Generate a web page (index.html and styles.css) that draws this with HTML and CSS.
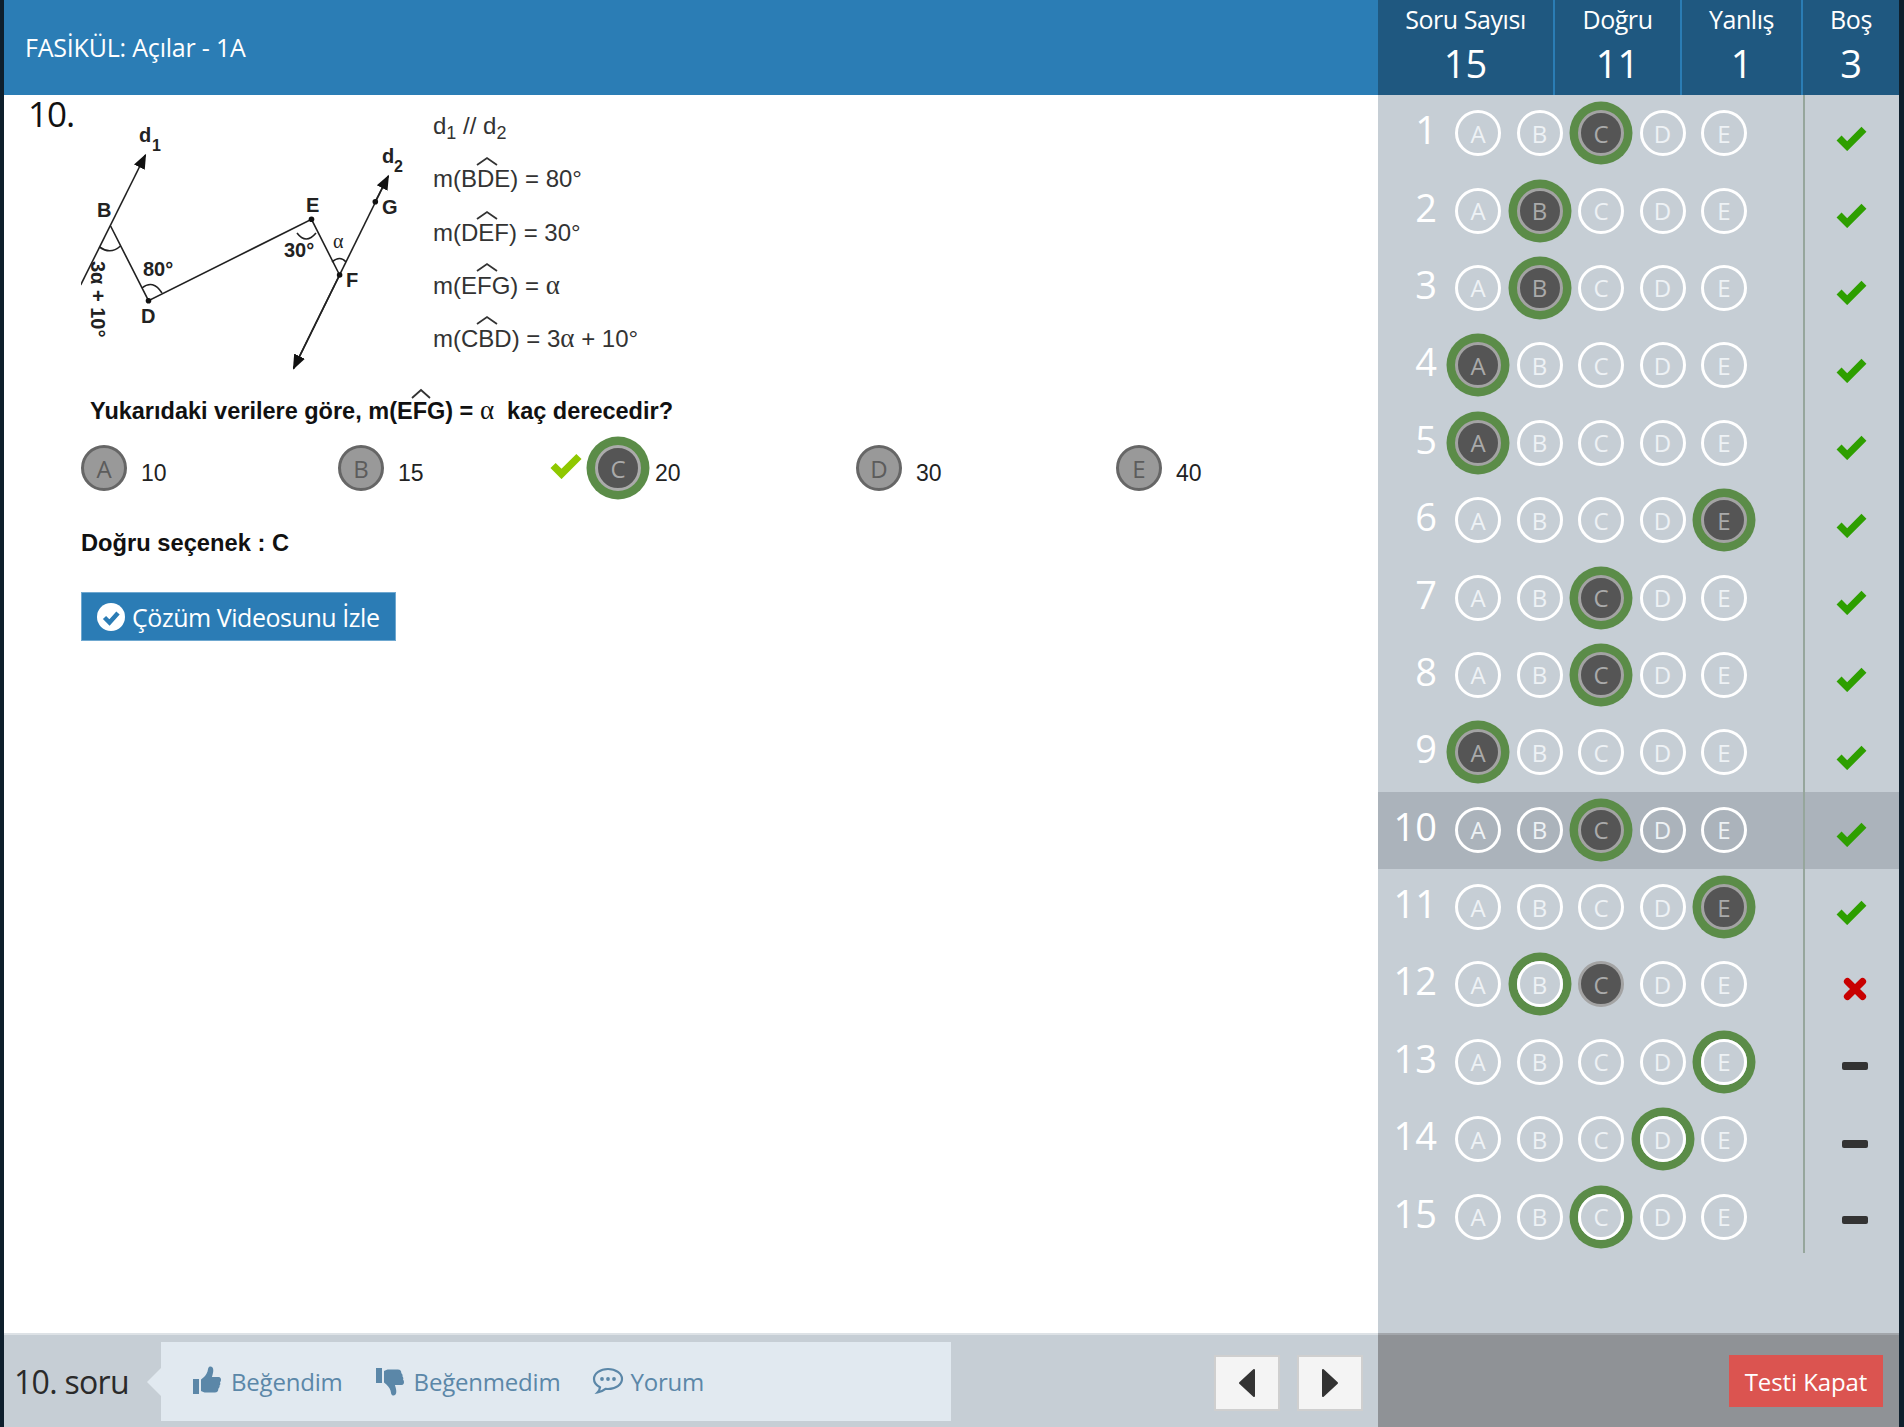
FILE: index.html
```html
<!DOCTYPE html>
<html lang="tr">
<head>
<meta charset="utf-8">
<title>FASİKÜL: Açılar - 1A</title>
<link rel="stylesheet" href="styles.css">
</head>
<body>
<div class="app">
  <header class="topbar">
    <div class="topbar-title">FASİKÜL: Açılar - 1A</div>
    <div class="stats">
      <div class="stat stat-total"><span class="stat-label">Soru Sayısı</span><span class="stat-value">15</span></div>
      <div class="stat stat-right"><span class="stat-label">Doğru</span><span class="stat-value">11</span></div>
      <div class="stat stat-wrong"><span class="stat-label">Yanlış</span><span class="stat-value">1</span></div>
      <div class="stat stat-empty"><span class="stat-label">Boş</span><span class="stat-value">3</span></div>
    </div>
  </header>

  <div class="middle">
    <main class="question">
      <div class="question-head">
        <div class="question-no">10.</div>
        <svg class="figure" viewBox="82 95 620 337" width="620" height="337" aria-label="Soru görseli">
          <defs>
            <marker id="tip" viewBox="0 0 10 10" refX="9" refY="5" markerWidth="15" markerHeight="15" markerUnits="userSpaceOnUse" orient="auto"><path d="M0 1 10 5 0 9z" fill="#111"/></marker>
          </defs>
          <g class="fig-lines">
            <line x1="81.7" y1="285" x2="146.4" y2="155" marker-end="url(#tip)"/>
            <polyline points="111.6,226 149.5,300.7 312.5,219.3 340.6,275"/>
            <line x1="294.6" y1="368.3" x2="389.3" y2="176" />
            <line x1="340.6" y1="275" x2="294.6" y2="368.3" marker-end="url(#tip)"/>
            <line x1="376" y1="202" x2="389.3" y2="176" marker-end="url(#tip)"/>
            <path d="M100.5 247q11 8 21 -1M143 288q11-9 20 5M298 233q9 12 19 0M333 262q8-7 14 0"/>
          </g>
          <g class="fig-dots">
            <circle cx="149.5" cy="300.7" r="2.8"/><circle cx="312.5" cy="219.3" r="2.8"/><circle cx="340.6" cy="275" r="2.8"/><circle cx="376.3" cy="201.7" r="2.8"/>
          </g>
          <g class="fig-label">
            <text x="140" y="142">d</text><text class="fig-sub" x="153" y="151">1</text>
            <text x="383" y="163">d</text><text class="fig-sub" x="395" y="172">2</text>
            <text x="98" y="217">B</text><text x="307" y="212">E</text><text x="383" y="214">G</text>
            <text x="347" y="287">F</text><text x="142" y="323">D</text>
            <text x="144" y="276">80°</text><text x="285" y="257">30°</text>
            <text class="fig-alpha" x="334" y="248">α</text>
            <text transform="translate(92 261) rotate(90)">3α + 10°</text>
          </g>
          <g class="fig-formula">
            <text x="434" y="134">d<tspan class="fig-formula-sub" dy="5">1</tspan><tspan dy="-5"> // d</tspan><tspan class="fig-formula-sub" dy="5">2</tspan></text>
            <text x="434" y="187">m(BDE) = 80°</text>
            <text x="434" y="240.500">m(DEF) = 30°</text>
            <text x="434" y="294">m(EFG) = <tspan class="fig-serif">α</tspan></text>
            <text x="434" y="347">m(CBD) = 3<tspan class="fig-serif">α</tspan> + 10°</text>
            <text class="fig-ask" x="91" y="418.500">Yukarıdaki verilere göre, m(EFG) = <tspan class="fig-serif-light">α</tspan>  kaç derecedir?</text>
          </g>
          <g class="fig-hats">
            <path d="M478 165 488 158 498 165M478 219 488 212 498 219M478 271 488 264 498 271M478 324 488 317 498 324M413 398 422 390 431 398"/>
          </g>
        </svg>
      </div>

      <div class="choices">
        <div class="choice"><span class="choice-mark">A</span><span class="choice-text">10</span></div>
        <div class="choice"><span class="choice-mark">B</span><span class="choice-text">15</span></div>
        <div class="choice">
          <svg class="choice-tick" viewBox="0 0 30 24" width="34" height="27"><polyline points="3.5,12 11,19.500 26.500,4" /></svg>
          <span class="choice-mark choice-mark-on">C</span><span class="choice-text">20</span>
        </div>
        <div class="choice"><span class="choice-mark">D</span><span class="choice-text">30</span></div>
        <div class="choice"><span class="choice-mark">E</span><span class="choice-text">40</span></div>
      </div>

      <p class="answer">Doğru seçenek : C</p>

      <button class="video-btn" type="button">
        <svg viewBox="0 0 28 28" width="28" height="28"><circle cx="14" cy="14" r="14" fill="#fff"/><polyline points="7.500,14.500 12.500,19.500 21,10" fill="none" stroke="#2b7cb5" stroke-width="4.500"/></svg>
        <span>Çözüm Videosunu İzle</span>
      </button>
    </main>

    <aside class="sheet">
      <div class="row"><span class="row-no">1</span><div class="opts"><span class="opt">A</span><span class="opt">B</span><span class="opt opt-fill opt-ring">C</span><span class="opt">D</span><span class="opt">E</span></div><div class="mark"><svg class="ok" viewBox="0 0 30 24"><polyline points="3.5,12 11,19.500 26.500,4"/></svg></div></div>
      <div class="row"><span class="row-no">2</span><div class="opts"><span class="opt">A</span><span class="opt opt-fill opt-ring">B</span><span class="opt">C</span><span class="opt">D</span><span class="opt">E</span></div><div class="mark"><svg class="ok" viewBox="0 0 30 24"><polyline points="3.5,12 11,19.500 26.500,4"/></svg></div></div>
      <div class="row"><span class="row-no">3</span><div class="opts"><span class="opt">A</span><span class="opt opt-fill opt-ring">B</span><span class="opt">C</span><span class="opt">D</span><span class="opt">E</span></div><div class="mark"><svg class="ok" viewBox="0 0 30 24"><polyline points="3.5,12 11,19.500 26.500,4"/></svg></div></div>
      <div class="row"><span class="row-no">4</span><div class="opts"><span class="opt opt-fill opt-ring">A</span><span class="opt">B</span><span class="opt">C</span><span class="opt">D</span><span class="opt">E</span></div><div class="mark"><svg class="ok" viewBox="0 0 30 24"><polyline points="3.5,12 11,19.500 26.500,4"/></svg></div></div>
      <div class="row"><span class="row-no">5</span><div class="opts"><span class="opt opt-fill opt-ring">A</span><span class="opt">B</span><span class="opt">C</span><span class="opt">D</span><span class="opt">E</span></div><div class="mark"><svg class="ok" viewBox="0 0 30 24"><polyline points="3.5,12 11,19.500 26.500,4"/></svg></div></div>
      <div class="row"><span class="row-no">6</span><div class="opts"><span class="opt">A</span><span class="opt">B</span><span class="opt">C</span><span class="opt">D</span><span class="opt opt-fill opt-ring">E</span></div><div class="mark"><svg class="ok" viewBox="0 0 30 24"><polyline points="3.5,12 11,19.500 26.500,4"/></svg></div></div>
      <div class="row"><span class="row-no">7</span><div class="opts"><span class="opt">A</span><span class="opt">B</span><span class="opt opt-fill opt-ring">C</span><span class="opt">D</span><span class="opt">E</span></div><div class="mark"><svg class="ok" viewBox="0 0 30 24"><polyline points="3.5,12 11,19.500 26.500,4"/></svg></div></div>
      <div class="row"><span class="row-no">8</span><div class="opts"><span class="opt">A</span><span class="opt">B</span><span class="opt opt-fill opt-ring">C</span><span class="opt">D</span><span class="opt">E</span></div><div class="mark"><svg class="ok" viewBox="0 0 30 24"><polyline points="3.5,12 11,19.500 26.500,4"/></svg></div></div>
      <div class="row"><span class="row-no">9</span><div class="opts"><span class="opt opt-fill opt-ring">A</span><span class="opt">B</span><span class="opt">C</span><span class="opt">D</span><span class="opt">E</span></div><div class="mark"><svg class="ok" viewBox="0 0 30 24"><polyline points="3.5,12 11,19.500 26.500,4"/></svg></div></div>
      <div class="row row-current"><span class="row-no">10</span><div class="opts"><span class="opt">A</span><span class="opt">B</span><span class="opt opt-fill opt-ring">C</span><span class="opt">D</span><span class="opt">E</span></div><div class="mark"><svg class="ok" viewBox="0 0 30 24"><polyline points="3.5,12 11,19.500 26.500,4"/></svg></div></div>
      <div class="row"><span class="row-no">11</span><div class="opts"><span class="opt">A</span><span class="opt">B</span><span class="opt">C</span><span class="opt">D</span><span class="opt opt-fill opt-ring">E</span></div><div class="mark"><svg class="ok" viewBox="0 0 30 24"><polyline points="3.5,12 11,19.500 26.500,4"/></svg></div></div>
      <div class="row"><span class="row-no">12</span><div class="opts"><span class="opt">A</span><span class="opt opt-ring">B</span><span class="opt opt-fill">C</span><span class="opt">D</span><span class="opt">E</span></div><div class="mark"><svg class="bad" viewBox="0 0 24 24"><path d="M5 5 19 19M19 5 5 19"/></svg></div></div>
      <div class="row"><span class="row-no">13</span><div class="opts"><span class="opt">A</span><span class="opt">B</span><span class="opt">C</span><span class="opt">D</span><span class="opt opt-ring">E</span></div><div class="mark"><span class="none"></span></div></div>
      <div class="row"><span class="row-no">14</span><div class="opts"><span class="opt">A</span><span class="opt">B</span><span class="opt">C</span><span class="opt opt-ring">D</span><span class="opt">E</span></div><div class="mark"><span class="none"></span></div></div>
      <div class="row"><span class="row-no">15</span><div class="opts"><span class="opt">A</span><span class="opt">B</span><span class="opt opt-ring">C</span><span class="opt">D</span><span class="opt">E</span></div><div class="mark"><span class="none"></span></div></div>
    </aside>
  </div>

  <footer class="bottom">
    <div class="bottom-left">
      <span class="current-no">10. soru</span>
      <div class="feedback">
        <a class="fb-link">
          <svg viewBox="0 0 30 30" width="30" height="30"><path class="fb-icon" d="M1 13h6v15H1zM9 13.500c3-2 5.500-5 6.500-8 .7-2.500.5-5 3-5 3 0 3.500 4 2 8.500l-.6 2h6.600c2 0 2.500 1.800 2.500 3 0 1-.5 1.800-1 2.400.5.800.5 2.300-.5 3.200.3 1.200-.2 2.500-1.200 3.100.2 2.200-1 3.800-3.500 3.800H14c-2 0-3.500-.7-5-1.500z"/></svg>
          <span>Beğendim</span>
        </a>
        <a class="fb-link">
          <svg viewBox="0 0 30 30" width="30" height="30"><path class="fb-icon" d="M1 2h6v15H1zM9 16.500c3 2 5.500 5 6.500 8 .7 2.500.5 5 3 5 3 0 3.500-4 2-8.500l-.6-2h6.600c2 0 2.500-1.800 2.500-3 0-1-.5-1.800-1-2.400.5-.8.500-2.300-.5-3.200.3-1.200-.2-2.500-1.200-3.100.2-2.200-1-3.800-3.500-3.800H14c-2 0-3.500.7-5 1.500z"/></svg>
          <span>Beğenmedim</span>
        </a>
        <a class="fb-link fb-link-comment">
          <svg viewBox="0 0 32 30" width="32" height="30"><path class="fb-bubble" d="M16 3C8.300 3 2 7.500 2 13c0 3.500 2.500 6.500 6 8.300-.3 2.200-1.300 3.900-2.500 5.200 3-.5 6-2 8-3.600.8.100 1.600.1 2.500.1 7.700 0 14-4.500 14-10S23.700 3 16 3z"/><circle class="fb-icon" cx="10" cy="13" r="1.900"/><circle class="fb-icon" cx="16" cy="13" r="1.900"/><circle class="fb-icon" cx="22" cy="13" r="1.900"/></svg>
          <span>Yorum</span>
        </a>
      </div>
      <div class="nav">
        <button class="nav-btn" type="button" aria-label="Önceki"><svg viewBox="0 0 18 30" width="18" height="30"><path class="nav-arrow" d="M16 2 2 15 16 28z"/></svg></button>
        <button class="nav-btn" type="button" aria-label="Sonraki"><svg viewBox="0 0 18 30" width="18" height="30"><path class="nav-arrow" d="M2 2 16 15 2 28z"/></svg></button>
      </div>
    </div>
    <div class="bottom-right">
      <button class="close-btn" type="button">Testi Kapat</button>
    </div>
  </footer>
</div>
</body>
</html>
```

FILE: styles.css
```css
* { box-sizing: border-box; }
html, body { margin: 0; height: 100%; }
body {
  background: #0e1f2c;
  font-family: "Open Sans", "Liberation Sans", sans-serif;
  overflow: hidden;
}
.app {
  width: 1904px;
  height: 1427px;
  padding: 0 5px 0 4px;
  display: flex;
  flex-direction: column;
}

/* top bar */
.topbar {
  height: 95px;
  display: flex;
  background: #2b7db5;
  color: #fff;
}
.topbar-title {
  width: 1374px;
  padding-left: 21px;
  font-size: 25px;
  line-height: 95px;
  letter-spacing: -0.2px;
}
.stats {
  width: 521px;
  display: flex;
  background: #1f5880;
}
.stat {
  display: flex;
  flex-direction: column;
  align-items: center;
  border-right: 2px solid #2b7db5;
}
.stat-total { width: 177px; }
.stat-right { width: 127px; }
.stat-wrong { width: 121px; }
.stat-empty { width: 96px; border-right: 0; }
.stat-label { font-size: 25px; line-height: 30px; margin-top: 4px; letter-spacing: -0.45px; }
.stat-value { font-size: 38px; line-height: 48px; margin-top: 5px; font-weight: 400; }

/* middle */
.middle { flex: 1; display: flex; min-height: 0; }
.question {
  width: 1374px;
  background: #fff;
  padding-left: 77px;
  position: relative;
}
.question-head { display: flex; }
.question-no {
  position: absolute;
  left: 24px;
  top: -3px;
  font-size: 35px;
  line-height: 44px;
  color: #111;
  letter-spacing: -1px;
}
.figure { display: block; flex: none; }

.fig-lines { fill: none; stroke: #222; stroke-width: 1.6; }
.fig-dots { fill: #111; }
.fig-label text {
  font-family: "Liberation Sans", sans-serif;
  font-weight: 700;
  font-size: 20px;
  fill: #222;
}
.fig-label .fig-sub { font-size: 16px; }
.fig-label .fig-alpha { font-family: "Liberation Serif", serif; font-weight: 400; }
.fig-formula text {
  font-family: "Liberation Sans", sans-serif;
  font-size: 24px;
  fill: #333;
}
.fig-formula-sub { font-size: 18px; }
.fig-serif { font-family: "Liberation Serif", serif; font-size: 27px; }
.fig-formula .fig-ask { font-weight: 700; font-size: 23.500px; fill: #111; white-space: pre; }
.fig-serif-light { font-family: "Liberation Serif", serif; font-weight: 400; font-size: 27px; }
.fig-hats { fill: none; stroke: #333; stroke-width: 1.8; }

.choices {
  display: grid;
  grid-template-columns: 257px 257px 261px 260px auto;
  margin-top: 13px;
}
.choice { display: flex; align-items: center; position: relative; height: 46px; }
.choice-mark {
  width: 46px;
  height: 46px;
  border-radius: 50%;
  border: 3px solid #666;
  background: #999;
  color: #5c5c5c;
  display: flex;
  align-items: center;
  justify-content: center;
  font-size: 24px;
}
.choice-mark-on {
  background: #555;
  border-color: #ababab;
  color: #aaa;
  box-shadow: 0 0 0 8.500px #5b8c48;
}
.choice-text {
  margin: 10px 0 0 14px;
  font-family: "Liberation Sans", sans-serif;
  font-size: 23px;
  color: #222;
}
.choice-tick {
  position: absolute;
  left: -46px;
  top: 7px;
  fill: none;
  stroke: #8fc800;
  stroke-width: 6.500;
}
.answer {
  margin: 37px 0 0;
  font-family: "Liberation Sans", sans-serif;
  font-weight: 700;
  font-size: 23.700px;
  line-height: 30px;
  color: #111;
}
.video-btn {
  margin-top: 34px;
  width: 315px;
  height: 49px;
  padding: 0 0 0 15px;
  border: 1px solid #6fa8d0;
  background: #2b7cb5;
  color: #fff;
  font: 25px "Open Sans", "Liberation Sans", sans-serif;
  letter-spacing: -0.45px;
  display: flex;
  align-items: center;
  gap: 7px;
}

/* answer sheet */
.sheet { width: 521px; background: #c6ced5; padding-bottom: 0; }
.row { height: 77.4px; display: flex; align-items: center; color: #fff; position: relative; }
.row-current { background: #abb3bb; }
.row-no {
  width: 59px;
  text-align: right;
  font-size: 38px;
  line-height: 48px;
  margin-top: -9px;
}
.opts { display: flex; gap: 15.500px; margin-left: 18px; margin-top: -1px; }
.opt {
  position: relative;
  width: 46px;
  height: 46px;
  border-radius: 50%;
  border: 3px solid #fff;
  display: flex;
  align-items: center;
  justify-content: center;
  font-size: 24px;
  color: #eef2f5;
}
.opt-fill { background: #555; border-color: #a3a3a3; color: #aaa; }
.opt-ring { box-shadow: 0 0 0 8.500px #5b8c48; z-index: 1; }
.mark {
  position: absolute;
  left: 425px;
  top: 0;
  bottom: 0;
  width: 96px;
  border-left: 2px solid #96a69c;
  display: flex;
  align-items: center;
  justify-content: center;
  padding: 8px 0 0 0;
}
.row:last-child .mark { bottom: 3px; }
.ok { width: 33px; height: 26px; margin-right: 2px; fill: none; stroke: #2e9f00; stroke-width: 6.500; }
.bad { width: 26px; height: 26px; margin-left: 5px; fill: none; stroke: #c80000; stroke-width: 6.500; stroke-linecap: round; }
.none { width: 26px; height: 8px; margin-left: 5px; border-radius: 2px; background: #333; }

/* footer */
.bottom { height: 94px; display: flex; }
.bottom-left {
  width: 1374px;
  background: #c6ced5;
  border-top: 2px solid #dde2e6;
  display: flex;
  align-items: center;
}
.current-no {
  width: 157px;
  padding-left: 10px;
  font-size: 32px;
  letter-spacing: -0.7px;
  color: #2a2a2a;
}
.feedback {
  position: relative;
  width: 790px;
  height: 79px;
  background: #e1e9f0;
  display: flex;
  align-items: center;
  padding-left: 31px;
  color: #5b87a8;
  font-size: 24px;
  letter-spacing: -0.2px;
}
.feedback::before {
  content: "";
  position: absolute;
  left: -14px;
  top: 26px;
  border: 14px solid transparent;
  border-left: 0;
  border-right-color: #e1e9f0;
}
.fb-link { display: flex; align-items: center; gap: 9px; margin-right: 32px; }
.fb-link-comment { gap: 6px; }
.fb-icon { fill: #5b87a8; }
.fb-bubble { fill: none; stroke: #5b87a8; stroke-width: 2.2; }
.nav { display: flex; gap: 17px; margin: 3px 0 0 263px; }
.nav-btn {
  width: 66px;
  height: 56px;
  padding: 0;
  background: #f4f4f4;
  border: 2px solid #cfcfcf;
  display: flex;
  align-items: center;
  justify-content: center;
}
.nav-arrow { fill: #333; stroke: #333; stroke-width: 2; stroke-linejoin: round; }
.bottom-right {
  width: 521px;
  background: #8f9296;
  border-top: 2px solid #a2a6ab;
  display: flex;
  justify-content: flex-end;
  align-items: flex-start;
  padding: 20px 16px 0 0;
}
.close-btn {
  width: 154px;
  height: 52px;
  border: 0;
  padding: 0;
  background: #db5450;
  color: #fff;
  font: 24px "Open Sans", "Liberation Sans", sans-serif;
  letter-spacing: -0.1px;
}
```
